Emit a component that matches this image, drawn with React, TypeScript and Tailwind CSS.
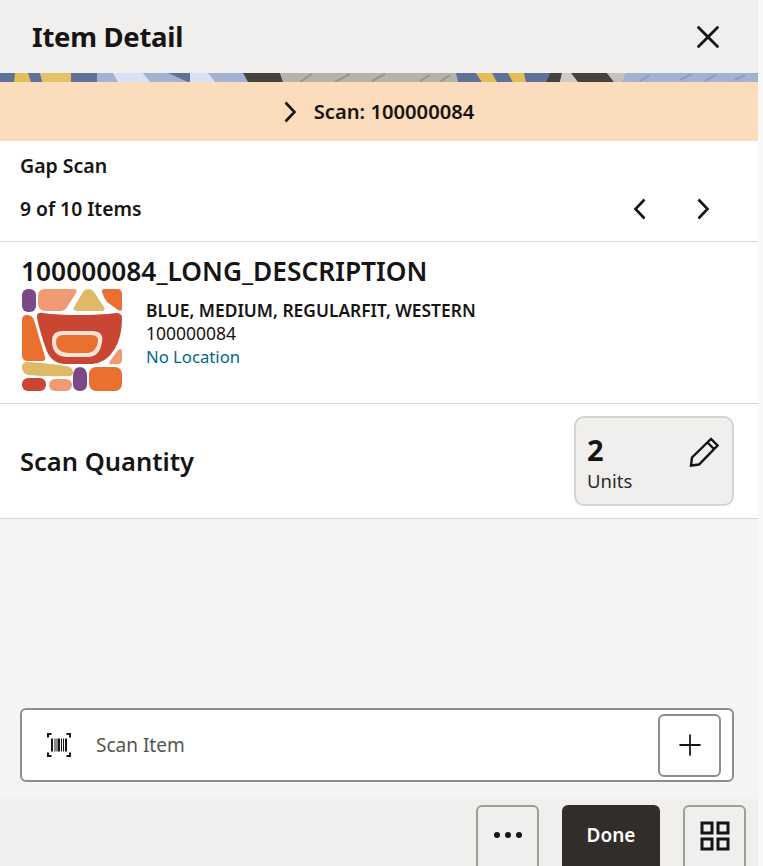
import React from "react";
import { X, Plus } from "lucide-react";

const font = { fontFamily: '"Noto Sans", "Open Sans", sans-serif' };

function Chevron({ dir }: { dir: "left" | "right" }) {
  return (
    <svg width="14" height="22" viewBox="0 0 14 22" fill="none" stroke="#161513" strokeWidth="2.600">
      <path d={dir === "right" ? "M2.500 1.500L11.500 11L2.500 20.500" : "M11.500 1.500L2.500 11L11.500 20.500"} />
    </svg>
  );
}

// decorative band under the header
function Band() {
  return (
    <svg width="758" height="9" viewBox="0 0 758 9" className="block shrink-0">
      <rect width="758" height="9" fill="#a5b1d3" />
      <polygon points="0,0 17,0 15,9 0,9" fill="#5f7199" />
      <polygon points="15,0 28,0 31,9 14,9" fill="#e3bd55" />
      <polygon points="28,0 40,0 42,9 31,9" fill="#5f7199" />
      <polygon points="40,0 71,0 71,9 43,9" fill="#e6c266" />
      <polygon points="71,0 97,0 97,9 71,9" fill="#5f7199" />
      <polygon points="113,0 143,0 150,9 118,9" fill="#d9e2f5" />
      <polygon points="168,0 190,0 190,9 188,9" fill="#5f7199" />
      <polygon points="190,0 208,0 215,9 190,9" fill="#d9e2f5" />
      <polygon points="243,0 280,0 283,9 248,9" fill="#46433f" />
      <polygon points="280,0 458,0 458,9 283,9" fill="#b7b2ab" />
      <path d="M300 9L312 1M335 9L350 1M372 8L385 1M420 8L430 2M440 9L450 2" stroke="#9a968f" strokeWidth="2" />
      <polygon points="456,0 476,0 482,9 458,9" fill="#5f7199" />
      <polygon points="476,0 492,0 497,9 482,9" fill="#e3bd55" />
      <polygon points="492,0 508,0 513,9 497,9" fill="#5f7199" />
      <polygon points="508,0 524,0 526,9 513,9" fill="#e3bd55" />
      <polygon points="524,0 550,0 546,9 526,9" fill="#5f7199" />
      <polygon points="550,0 562,0 560,9 546,9" fill="#46433f" />
      <polygon points="562,0 571,0 578,9 560,9" fill="#cfcbc5" />
      <polygon points="571,0 607,0 614,9 578,9" fill="#46433f" />
      <polygon points="607,0 626,0 622,9 614,9" fill="#c6c2bb" />
      <path d="M640 8L650 2M680 7L692 1M705 8L716 2M735 7L745 2" stroke="#8f9cbf" strokeWidth="2" />
    </svg>
  );
}

function ItemThumb() {
  return (
    <svg width="101" height="102" viewBox="0 0 101 102" className="shrink-0">
      <rect x="0" y="0" width="14" height="23" rx="6" fill="#7b4a86" />
      <path d="M16 7q0-7 7-7h28q5 0 3 4l-9 14q-2 4-7 4H24q-8 0-8-7z" fill="#ef9a72" />
      <path d="M61 3q2-3 6-3 3 0 5 3l10 15q2 4-3 4H55q-5 0-3-4z" fill="#dfb968" />
      <path d="M80 3q-1-3 3-3h12q5 0 5 5v15q0 3-4 1L85 13q-3-4-5-10z" fill="#ea7030" />
      <path d="M0 31q0-5 5-5 5 0 7 5l11 37q1 4-3 4H6q-6 0-6-6z" fill="#ea7030" />
      <path d="M15 29q-1-6 6-5 14 2 36 2 20 0 37-2 6 0 6 5 0 20-8 32-8 13-22 14H42q-13-1-18-15-6-17-9-31z" fill="#c94632" />
      <path d="M30 52q0-10 10-10h30q12 0 10 11-2 14-13 15H44q-14-1-14-16z" fill="#fbe3d4" />
      <path d="M34 53q0-7 7-7h28q8 0 7 7-2 10-10 11H46q-12-1-12-11z" fill="#ea7030" />
      <path d="M100 63v8q0 4-4 4h-7q-3 0-1-3l8-11q4-3 4 2z" fill="#ef9a72" />
      <path d="M0 78q0-5 6-5 20 1 38 4 7 1 7 6t-6 4q-20 1-38-1-7-1-7-8z" fill="#dfb968" />
      <rect x="0" y="89" width="24" height="13" rx="6" fill="#c94632" />
      <rect x="27" y="90" width="23" height="12" rx="6" fill="#ef9a72" />
      <path d="M51 88q0-10 7-10 7 0 7 10v7q0 7-7 7-7 0-7-7z" fill="#7b4a86" />
      <rect x="67" y="78" width="33" height="24" rx="7" fill="#ea7030" />
    </svg>
  );
}

function PencilIcon() {
  return (
    <svg width="30" height="30" viewBox="0 0 30 30" fill="none" stroke="#161513" strokeWidth="2.400" strokeLinejoin="miter">
      <path d="M2 28.500L3 20.500L22 2L28.500 8.500L10 27.500Z" />
      <path d="M18.500 5.500L25 12" />
    </svg>
  );
}

function BarcodeIcon() {
  return (
    <svg width="26" height="26" viewBox="0 0 26 26" fill="none" stroke="#161513">
      <path d="M2 5.500V2H5.500M20.500 2H24V5.500M2 20.500V24H5.500M20.500 24H24V20.500" strokeWidth="2" />
      <path d="M6 6.500V19.500M13 6.500V19.500M20 6.500V19.500" strokeWidth="2" />
      <path d="M9 6.500V19.500M11 6.500V19.500M15.500 6.500V19.500M17.500 6.500V19.500" strokeWidth="1" />
    </svg>
  );
}

function GridIcon() {
  return (
    <svg width="30" height="30" viewBox="0 0 30 30" fill="none" stroke="#161513" strokeWidth="3">
      <rect x="2" y="2" width="10" height="10" />
      <rect x="18" y="2" width="10" height="10" />
      <rect x="2" y="18" width="10" height="10" />
      <rect x="18" y="18" width="10" height="10" />
    </svg>
  );
}

export default function App() {
  return (
    <div className="w-[763px] h-[866px] overflow-hidden bg-[#f8f8f8] flex text-[#161513]" style={font}>
      <div className="w-[758px] h-full flex flex-col bg-[#f5f4f2]">
        <header className="h-[73px] shrink-0 bg-[#f1efed] flex items-center justify-between pl-[32px] pr-[31px]">
          <h1 className="text-[27.500px] font-bold tracking-[-0.3px] leading-none">Item Detail</h1>
          <X className="w-[38px] h-[38px]" strokeWidth={1.75} />
        </header>

        <Band />

        <div className="h-[59px] shrink-0 bg-[#fbdcbc] flex items-center justify-center gap-[17px] pr-[1px]">
          <Chevron dir="right" />
          <span className="text-[20.200px] font-semibold">Scan: 100000084</span>
        </div>

        <section className="h-[101px] shrink-0 bg-white border-b border-[#d6d4d1] pl-[20px] pr-[48px] pt-[13px]">
          <div className="text-[19.500px] font-semibold leading-[24px]">Gap Scan</div>
          <div className="flex items-center justify-between mt-[19px]">
            <span className="text-[19.300px] font-semibold leading-[24px]">9 of 10 Items</span>
            <div className="flex items-center gap-[49px]">
              <Chevron dir="left" />
              <Chevron dir="right" />
            </div>
          </div>
        </section>

        <section className="h-[162px] shrink-0 bg-white border-b border-[#d6d4d1] pl-[21px] pt-[12px]">
          <div className="text-[26.300px] font-semibold leading-[34px]">100000084_LONG_DESCRIPTION</div>
          <div className="flex items-start pl-[1px] pt-[1px]">
            <ItemThumb />
            <div className="ml-[23px] pt-[10px] text-[16.700px] leading-[23px]">
              <div className="font-semibold text-[17.400px]">BLUE, MEDIUM, REGULARFIT, WESTERN</div>
              <div className="text-[17.500px]">100000084</div>
              <div className="text-[#00688c]">No Location</div>
            </div>
          </div>
        </section>

        <section className="h-[115px] shrink-0 bg-white border-b border-[#d6d4d1] pl-[20px] pr-[24px] flex items-center justify-between">
          <span className="text-[25.500px] font-semibold">Scan Quantity</span>
          <div className="w-[160px] h-[90px] rounded-[10px] bg-[#f1efed] border-2 border-[#d6d4d1] pl-[11px] pr-[13px] pt-[13px] flex justify-between">
            <div>
              <div className="text-[29px] font-bold leading-[38px]">2</div>
              <div className="text-[18.500px] leading-[24px] text-[#2b2a28]">Units</div>
            </div>
            <div className="mt-[6px]">
              <PencilIcon />
            </div>
          </div>
        </section>

        <div className="flex-1 flex flex-col justify-end pl-[20px] pr-[24px] pb-[17px]">
          <div className="h-[74px] rounded-[6px] bg-white border-2 border-[#8f8d8a] flex items-center pl-[24px] pr-[11px]">
            <BarcodeIcon />
            <span className="ml-[24px] text-[19px] text-[#575552]">Scan Item</span>
            <button className="ml-auto w-[63px] h-[63px] rounded-[6px] border-2 border-[#8f8d8a] bg-white flex items-center justify-center">
              <Plus className="w-[34px] h-[34px]" strokeWidth={1.25} />
            </button>
          </div>
        </div>

        <footer className="h-[67px] shrink-0 bg-[#f1efed] flex items-start justify-end gap-[23px] pl-[20px] pr-[12px] pt-[6px]">
          <button className="w-[63px] h-[70px] rounded-[6px] border-2 border-[#a09e9b] flex items-center justify-center gap-[5px] pb-[10px]">
            <span className="w-[6px] h-[6px] rounded-full bg-[#161513]" />
            <span className="w-[6px] h-[6px] rounded-full bg-[#161513]" />
            <span className="w-[6px] h-[6px] rounded-full bg-[#161513]" />
          </button>
          <button className="w-[98px] h-[70px] rounded-[6px] bg-[#312d2a] text-white text-[19px] font-semibold pb-[10px]">Done</button>
          <button className="w-[63px] h-[70px] rounded-[6px] border-2 border-[#a09e9b] flex items-center justify-center pb-[8px]">
            <GridIcon />
          </button>
        </footer>
      </div>
    </div>
  );
}
